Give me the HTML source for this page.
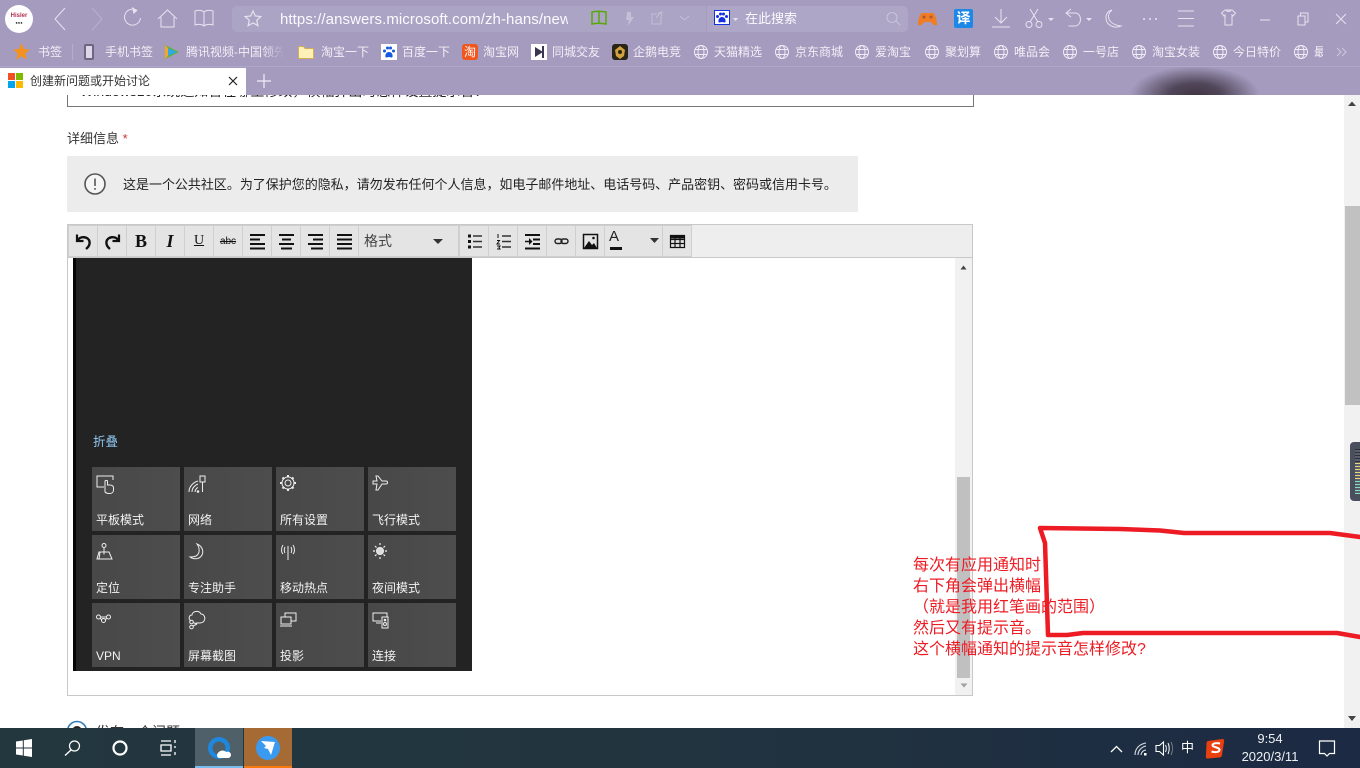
<!DOCTYPE html>
<html lang="zh-CN"><head><meta charset="utf-8"><title>创建新问题或开始讨论</title>
<style>
html,body{margin:0;padding:0;width:1360px;height:768px;overflow:hidden;background:#fff;font-family:"Liberation Sans","Noto Sans CJK SC",sans-serif;}
.a{position:absolute;white-space:nowrap;}
svg{position:absolute;overflow:visible;fill:none;}
.bm{position:absolute;top:44px;font-size:12px;line-height:16px;color:#f1eff6;white-space:nowrap;}
.tile{position:absolute;width:88px;height:64px;background:linear-gradient(90deg,#484848,#4d4d4d);}
.tile span{position:absolute;left:4px;top:45px;font-size:12px;line-height:16px;color:#f2f2f2;white-space:nowrap;}
.tile svg{left:4px;top:8px;stroke:#eee;stroke-width:1;}
.btn{position:absolute;top:226px;height:30px;width:28px;background:#e4e4e4;border-right:1px solid #cfcfcf;}
.btn svg{left:0;top:0;}
.r{position:absolute;left:913px;font-size:16px;line-height:21px;color:#ed1c24;white-space:nowrap;}
</style></head><body>

<!-- page content -->
<div class="a" style="left:67px;top:70px;width:905px;height:36px;border:1px solid #767676;border-top:0;"></div>
<div class="a" style="left:80px;top:81px;font-size:14px;line-height:20px;color:#222;">Windows10系统通知音在哪里修改，横幅弹出时怎样设置提示音？</div>
<div class="a" style="left:67px;top:130px;font-size:13px;line-height:18px;color:#333;">详细信息 <span style="color:#c33;">*</span></div>
<div class="a" style="left:67px;top:156px;width:791px;height:56px;background:#ececec;"></div>
<svg style="left:84px;top:173px" width="22" height="22"><circle cx="11" cy="11" r="10" stroke="#555" stroke-width="1.6" fill="#f5f5f5"/><path d="M11 5.500v7.500M11 15v1.800" stroke="#333" stroke-width="1.300"/></svg>
<div class="a" style="left:123px;top:176px;font-size:13px;line-height:18px;letter-spacing:-.02px;color:#222;">这是一个公共社区。为了保护您的隐私，请勿发布任何个人信息，如电子邮件地址、电话号码、产品密钥、密码或信用卡号。</div>

<!-- editor -->
<div class="a" style="left:67px;top:224px;width:904px;height:470px;border:1px solid #c8c8c8;background:#fff;"></div>
<div class="a" style="left:68px;top:225px;width:904px;height:32px;background:#eeeeee;border-bottom:1px solid #c8c8c8;"></div>
<div class="a" style="left:68px;top:225px;width:624px;height:32px;background:#cfcfcf;"></div>

<div class="btn" style="left:69px"><svg width="28" height="30"><path d="M8 8.500v6.500h6.500" stroke="#111" stroke-width="2.200"/><path d="M8.500 14.500c3-5 11-4 12 1 .6 3-1 5.500-3.500 7.500" stroke="#111" stroke-width="2.400"/></svg></div>
<div class="btn" style="left:98px"><svg width="28" height="30"><path d="M21 8.500v6.500h-6.500" stroke="#111" stroke-width="2.200"/><path d="M20.500 14.500c-3-5-11-4-12 1-.6 3 1 5.500 3.500 7.500" stroke="#111" stroke-width="2.400"/></svg></div>
<div class="btn" style="left:127px;text-align:center;font:bold 18px/31px 'Liberation Serif',serif;color:#111;">B</div>
<div class="btn" style="left:156px;text-align:center;font:italic bold 18px/31px 'Liberation Serif',serif;color:#111;">I</div>
<div class="btn" style="left:185px;text-align:center;font:14px/30px 'Liberation Serif',serif;color:#111;text-decoration:underline;">U</div>
<div class="btn" style="left:214px;text-align:center;font:10px/31px 'Liberation Sans',sans-serif;color:#111;"><span style="text-decoration:line-through;">abc</span></div>
<div class="btn" style="left:243px"><svg width="28" height="30"><path d="M7 9h15M7 13.500h10M7 18h15M7 22.500h15" stroke="#111" stroke-width="2"/></svg></div>
<div class="btn" style="left:272px"><svg width="28" height="30"><path d="M7 9h15M10 13.500h9M7 18h15M9 22.500h11" stroke="#111" stroke-width="2"/></svg></div>
<div class="btn" style="left:301px"><svg width="28" height="30"><path d="M7 9h15M12 13.500h10M7 18h15M10 22.500h12" stroke="#111" stroke-width="2"/></svg></div>
<div class="btn" style="left:330px"><svg width="28" height="30"><path d="M7 9h15M7 13.500h15M7 18h15M7 22.500h15" stroke="#111" stroke-width="2"/></svg></div>
<div class="btn" style="left:359px;width:99px;"><span class="a" style="left:5px;top:6px;font-size:14px;line-height:19px;color:#444;">格式</span><svg width="99" height="30"><path d="M74 13h10l-5 5z" fill="#333"/></svg></div>
<div class="btn" style="left:460px"><svg width="28" height="30"><path d="M8 8.500h3v3H8zM8 14h3v3H8zM8 19.500h3v3H8z" fill="#111"/><path d="M13 10h9M13 15.500h9M13 21h9" stroke="#333" stroke-width="1.400"/></svg></div>
<div class="btn" style="left:489px"><svg width="28" height="30"><path d="M9 8v4M8 14.500h2.500L8 18h3M8 20h3l-1 1.500 1 1.500H8" stroke="#111" stroke-width="1"/><path d="M13 10h9M13 15.500h9M13 21h9" stroke="#333" stroke-width="1.400"/></svg></div>
<div class="btn" style="left:518px"><svg width="28" height="30"><path d="M7 9h15M15 13.500h7M15 18h7M7 22.500h15" stroke="#111" stroke-width="2"/><path d="M7 15.500h5" stroke="#111" stroke-width="1.500"/><path d="M11 12v7l3.500-3.500z" fill="#111"/></svg></div>
<div class="btn" style="left:547px"><svg width="28" height="30"><rect x="8" y="13" width="7" height="4.500" rx="2.200" stroke="#222" stroke-width="1.400"/><rect x="14" y="13" width="7" height="4.500" rx="2.200" stroke="#222" stroke-width="1.400"/></svg></div>
<div class="btn" style="left:576px"><svg width="28" height="30"><rect x="7.500" y="8.500" width="14" height="14" stroke="#111" stroke-width="1.500"/><path d="M8 22l5-7 3 4 2-2 3 5z" fill="#111"/><circle cx="17.500" cy="12" r="1.300" fill="#111"/></svg></div>
<div class="btn" style="left:605px;width:57px;"><span class="a" style="left:4px;top:2px;font:15px/18px 'Liberation Sans',sans-serif;color:#222;">A</span><div class="a" style="left:5px;top:21px;width:12px;height:3px;background:#111;"></div><svg width="57" height="30"><path d="M45 12h9l-4.500 5z" fill="#333"/></svg></div>
<div class="btn" style="left:663px"><svg width="28" height="30"><path d="M7.500 9.500h14v12h-14zM7.500 13.500h14M7.500 17.500h14M12 9.500v12M17 9.500v12" stroke="#111" stroke-width="1.200"/><path d="M7 9h15v3.500H7z" fill="#111"/></svg></div>

<!-- inner scrollbar -->
<div class="a" style="left:955px;top:258px;width:17px;height:437px;background:#f1f1f1;"></div>
<div class="a" style="left:957px;top:477px;width:13px;height:201px;background:#c0c0c0;"></div>
<svg style="left:955px;top:258px" width="17" height="437"><path d="M5.500 11.500h6L8.500 7.500z" fill="#444"/><path d="M5.500 425.500h7L9 429.500z" fill="#a0a0a0"/></svg>

<!-- dark image -->
<div class="a" style="left:73px;top:258px;width:399px;height:413px;background:#232323;"></div>
<div class="a" style="left:73px;top:258px;width:3px;height:413px;background:#050505;"></div>
<div class="a" style="left:93px;top:434px;font-size:12.500px;line-height:16px;color:#8fc8f2;">折叠</div>

<div class="tile" style="left:92px;top:467px"><svg width="24" height="20"><path d="M8 12H1V1h16v4M9 17V6.500c0-1.500 2.500-1.500 2.500 0V10h2c2 0 4 .8 4 3v2c0 2-1.500 3.500-4 3.500h-1c-1.500 0-2.500-.5-3.500-1.500z"/></svg><span>平板模式</span></div>
<div class="tile" style="left:184px;top:467px"><svg width="24" height="20"><path d="M1 17C1 11 6 7 10 6M4 17c0-4 3-7 6-8M7 17c0-2 1.500-4 3-4.500"/><rect x="12" y="1" width="5" height="6"/><path d="M14.500 7v10"/><circle cx="10" cy="16.500" r=".8" fill="#eee"/></svg><span>网络</span></div>
<div class="tile" style="left:276px;top:467px"><svg width="24" height="20"><circle cx="8" cy="8" r="3"/><circle cx="8" cy="8" r="6"/><path d="M8 0v2.500M8 13.500V16M0 8h2.500M13.500 8H16M2.500 2.500l1.700 1.700M11.800 11.800l1.700 1.700M13.500 2.500l-1.700 1.700M4.200 11.800l-1.700 1.700" stroke-width="2"/></svg><span>所有设置</span></div>
<div class="tile" style="left:368px;top:467px"><svg width="24" height="20"><path d="M1 6h4l-1-5h2l4 5h4c2 0 2 3 0 3h-4l-4 6H4l1-6H1z"/></svg><span>飞行模式</span></div>

<div class="tile" style="left:92px;top:535px"><svg width="24" height="20"><circle cx="8" cy="2.500" r="2"/><path d="M8 4.500v5M3 9h10l3 7H1zM4 9l-1 7M8 9.500v2"/></svg><span>定位</span></div>
<div class="tile" style="left:184px;top:535px"><svg width="24" height="20"><path d="M9 1c5 2 7 7 5 11-2 4-8 5-12 2 5 0 8-1 9-5 .5-3-.5-6-2-8z"/></svg><span>专注助手</span></div>
<div class="tile" style="left:276px;top:535px"><svg width="24" height="20"><path d="M8 3v14M3 2C1 5 1 9 3 11M5 4c-1 2-1 4 0 6M13 2c2 3 2 7 0 9M11 4c1 2 1 4 0 6"/></svg><span>移动热点</span></div>
<div class="tile" style="left:368px;top:535px"><svg width="24" height="20"><circle cx="8" cy="8" r="3.500" fill="#ddd"/><path d="M8 0v2M8 14v2M1 8h2M13 8h2M3 3l1.500 1.500M11.500 11.500L13 13M13 3l-1.500 1.500M4.500 11.500L3 13" stroke-width="1.200"/></svg><span>夜间模式</span></div>

<div class="tile" style="left:92px;top:603px"><svg width="24" height="20"><circle cx="2.500" cy="6" r="2"/><circle cx="12.500" cy="6" r="2"/><circle cx="7.500" cy="9.500" r="2"/><path d="M4.500 6h6M4 7.500l2 1M11 7.500l-2 1"/></svg><span style="top:45px">VPN</span></div>
<div class="tile" style="left:184px;top:603px"><svg style="top:6px" width="24" height="20"><path d="M3 12C0 10 1 6 4 6c0-4 7-5 9-1 3 0 5 4 3 7-1 1.500-3 2-5 2H8"/><circle cx="3.500" cy="13" r="1.800"/><circle cx="3.500" cy="18" r="1.800"/><path d="M5 13.500l4 1.500M5 17l4-2"/></svg><span>屏幕截图</span></div>
<div class="tile" style="left:276px;top:603px"><svg width="24" height="20"><path d="M5 6V2h11v8h-5M1 6h10v7H1zM0 15h12"/></svg><span>投影</span></div>
<div class="tile" style="left:368px;top:603px"><svg width="24" height="20"><path d="M9 10H1V2h14v4M4 12h5"/><rect x="10" y="6" width="6" height="11"/><circle cx="13" cy="9" r=".8" fill="#eee"/><circle cx="13" cy="13" r="1.500"/></svg><span>连接</span></div>

<!-- red note -->
<div class="r" style="top:555px">每次有应用通知时</div>
<div class="r" style="top:576px">右下角会弹出横幅</div>
<div class="r" style="top:597px">（就是我用红笔画的范围）</div>
<div class="r" style="top:618px">然后又有提示音。</div>
<div class="r" style="top:639px">这个横幅通知的提示音怎样修改?</div>

<!-- bottom radio -->
<svg style="left:66px;top:720px" width="22" height="22"><circle cx="11" cy="11" r="9.500" stroke="#2a7ab8" stroke-width="1.500"/><circle cx="11" cy="11" r="5" fill="#222"/></svg>
<div class="a" style="left:96px;top:722px;font-size:14px;line-height:20px;color:#333;">发布一个问题</div>

<!-- page scrollbar -->
<div class="a" style="left:1344px;top:95px;width:16px;height:633px;background:#f1f1f1;"></div>
<div class="a" style="left:1345px;top:206px;width:15px;height:199px;background:#c1c1c1;"></div>
<svg style="left:1344px;top:95px" width="16" height="633"><path d="M4 11h8L8 6.500z" fill="#444"/><path d="M4 621h8l-4 5z" fill="#444"/></svg>

<svg style="left:0;top:0" width="1360" height="768"><path d="M1040 528L1120 529L1160 530.500L1184 533L1330 533L1360 537M1040 528L1045 543L1048 635L1067 635L1083 633L1337 633L1360 637" stroke="#ed1c24" stroke-width="4.500" stroke-linejoin="round" stroke-linecap="round"/></svg>

<!-- volume widget -->
<div class="a" style="left:1350px;top:442px;width:10px;height:59px;background:#4a4f5e;border-radius:4px 0 0 4px;"></div>
<div class="a" style="left:1355px;top:449px;width:5px;height:14px;background:repeating-linear-gradient(#2d2f38 0 1px,#5a5e6c 1px 3px);"></div>
<div class="a" style="left:1355px;top:463px;width:5px;height:18px;background:repeating-linear-gradient(#e6d878 0 1px,#5a5e6c 1px 3px);"></div>
<div class="a" style="left:1355px;top:481px;width:5px;height:13px;background:repeating-linear-gradient(#7fe0c0 0 1px,#5a5e6c 1px 3px);"></div>

<!-- browser chrome -->
<div class="a" style="left:0;top:0;width:1360px;height:95px;background:#a59bbf;overflow:hidden;">
  <div class="a" style="left:1130px;top:66px;width:130px;height:58px;background:radial-gradient(ellipse 50% 50% at 50% 50%,#423644 0%,#51475a 40%,rgba(165,155,191,0) 100%);"></div>
  <div class="a" style="left:0;top:66px;width:1360px;height:1px;background:#b0a7c9;"></div>
  <div class="a" style="left:232px;top:6px;width:474px;height:26px;background:#aca4c4;border-radius:5px 0 0 5px;"></div>
  <div class="a" style="left:706px;top:6px;width:202px;height:26px;background:#aea6c6;border-radius:0 5px 5px 0;border-left:1px solid #a59bbf;box-sizing:border-box;"></div>
  <div class="a" style="left:5px;top:5px;width:28px;height:28px;border-radius:50%;background:#fff;"></div>
  <div class="a" style="left:5px;top:13px;width:28px;text-align:center;font:bold 6px/7px 'Liberation Sans',sans-serif;color:#b03050;">Hisler</div>
  <div class="a" style="left:5px;top:20px;width:28px;text-align:center;font:4px/5px 'Liberation Sans',sans-serif;color:#333;">●●●</div>
  <svg style="left:0;top:0" width="1360" height="66" stroke="#e6e3ef" stroke-width="1">
    <path d="M65 8L55 19l10 11"/>
    <path d="M92 8l10 11-10 11" opacity=".3"/>
    <path d="M137 10.500a8 8 0 1 0 3.500 7.500"/><path d="M132 7l5.500 3.500-4 3.500" fill="#e6e3ef" stroke="none"/>
    <path d="M158 19l9.500-9 9.500 9M161 17v10h13V17"/>
    <path d="M195 11c3-1 7-1 9 1 2-2 6-2 9-1v14c-3-1-7-1-9 1-2-2-6-2-9-1zM204 12v14"/>
    <path d="M253 11l2.300 5 5.500.6-4.100 3.700 1.200 5.400-4.900-2.800-4.900 2.800 1.200-5.400-4.100-3.700 5.500-.6z" stroke-width="1.200"/>
    <path d="M592 12c4-1 9-1 14 0v12c-5-1-10-1-14 0zM599 12v12" stroke="#58a80c" stroke-width="1.500"/>
    <path d="M631 12h-4l-1 8h3l-1 6 6-9h-3z" fill="#c4bed6" stroke="none"/>
    <path d="M661 17v7h-9V14h5M658 13l4-1-1 5M661 12l-5 6" stroke="#c4bed6" stroke-width="1"/>
    <path d="M680 16l4.500 4 4.500-4" stroke="#c4bed6"/>
    <circle cx="892" cy="17.500" r="5" stroke="#c9c4da"/><path d="M896 21l4 4" stroke="#c9c4da"/>
    <path d="M1001 9v14M995 17l6 6 6-6M992 27h18"/>
    <circle cx="1029" cy="24.500" r="3"/><circle cx="1039" cy="24.500" r="3"/><path d="M1030 22L1038 9M1038 22L1030 9"/>
    <path d="M1048 18h6l-3 3z" fill="#e6e3ef" stroke="none"/>
    <path d="M1067 13h8c4 0 5.500 3.500 5.500 6.500s-2 6.500-6 6.500h-6M1071 9l-5 4 5 4"/>
    <path d="M1086 18h6l-3 3z" fill="#e6e3ef" stroke="none"/>
    <path d="M1112 10c-6 5-5 14 9 16-7 3-15-1-15-8 0-4 2-7 6-8z"/>
    <path d="M1143 19h2M1149 19h2M1155 19h2" stroke-width="1.600"/>
    <path d="M1178 11h16M1178 18.500h16M1178 26h16"/>
    <path d="M1225 10h7l3.500 3-2.500 3-1-1v10h-7V15l-1 1-2.500-3zM1226 10c1 2 4 2 5 0"/>
    <path d="M1260 20h10"/>
    <path d="M1298 16h7v9h-7zM1300.500 16v-3h7.500v9h-3"/>
    <path d="M1336 14l10 10M1346 14l-10 10"/>
    <path d="M733 18h5l-2.500 3z" fill="#e6e3ef" stroke="none"/>
  </svg>
  <div class="a" style="left:280px;top:10px;width:288px;height:20px;overflow:hidden;font-size:15px;line-height:19px;letter-spacing:.08px;color:#fbfaff;">https://answers.microsoft.com/zh-hans/new</div>
  <div class="a" style="left:714px;top:10px;width:16px;height:15px;background:#fff;border:1px solid #1530e0;box-sizing:border-box;"></div>
  <svg style="left:714px;top:10px" width="16" height="15"><path d="M8 7c3 0 4 3.500 3.500 5-.8 1-2.200 0-3.500 0s-2.700 1-3.500 0C4 10.500 5 7 8 7z" fill="#1530e0"/><circle cx="3.500" cy="6.500" r="1.500" fill="#1530e0"/><circle cx="6.500" cy="4" r="1.500" fill="#1530e0"/><circle cx="9.500" cy="4" r="1.500" fill="#1530e0"/><circle cx="12.500" cy="6.500" r="1.500" fill="#1530e0"/></svg>
  <div class="a" style="left:745px;top:10px;font-size:13px;line-height:18px;color:#fbfaff;">在此搜索</div>
  <svg style="left:918px;top:11px" width="20" height="15"><path d="M4 2h11c3 2 4 8 4 12-3 1-5-1-6-3H6c-1 2-3 4-6 3C0 10 1 4 4 2z" fill="#f07c24"/><circle cx="6" cy="6" r="1.500" fill="#a65a30"/><circle cx="13" cy="6" r="1.500" fill="#a65a30"/></svg>
  <div class="a" style="left:954px;top:9px;width:19px;height:19px;background:#1e88e8;border-radius:2px;text-align:center;font-size:14px;line-height:19px;font-weight:bold;color:#fff;">译</div>

  <!-- bookmarks -->
  <svg style="left:13px;top:43px" width="18" height="18"><path d="M8.500 0l2.400 6 6.100.5-4.700 4 1.500 6.200-5.300-3.400-5.300 3.400 1.500-6.200-4.700-4 6.100-.5z" fill="#f5911e"/></svg>
  <div class="bm" style="left:38px">书签</div>
  <div class="a" style="left:72px;top:44px;width:1px;height:16px;background:#b4accb;"></div>
  <div class="a" style="left:84px;top:44px;width:10px;height:16px;background:#dcd8e8;border:2px solid #6c6680;box-sizing:border-box;border-radius:2px;"></div>
  <div class="bm" style="left:105px">手机书签</div>
  <svg style="left:164px;top:44px" width="16" height="16"><path d="M1 1l14 7-14 7z" fill="#5fb52e"/><path d="M4 4l9 4-9 4z" fill="#2fa8e8"/><path d="M1 1l3 3v8l-3 3z" fill="#f5a623"/></svg>
  <div class="bm" style="left:186px;width:98px;overflow:hidden;-webkit-mask-image:linear-gradient(90deg,#000 80%,transparent);mask-image:linear-gradient(90deg,#000 80%,transparent);">腾讯视频-中国领先的</div>
  <svg style="left:298px;top:45px" width="16" height="14"><path d="M.5 1.500h5l1.500 2h8.500v10H.5z" fill="#fdf1b8" stroke="#d4ac5c"/></svg>
  <div class="bm" style="left:321px">淘宝一下</div>
  <div class="a" style="left:381px;top:44px;width:16px;height:16px;background:#fff;"></div>
  <svg style="left:381px;top:44px" width="16" height="16"><path d="M8 8c3 0 4 3 3.500 5-.8 1-2.200 0-3.500 0s-2.700 1-3.500 0C4 11 5 8 8 8z" fill="#1558e0"/><circle cx="3.500" cy="7" r="1.500" fill="#1558e0"/><circle cx="6.500" cy="4" r="1.500" fill="#1558e0"/><circle cx="9.500" cy="4" r="1.500" fill="#1558e0"/><circle cx="12.500" cy="7" r="1.500" fill="#1558e0"/></svg>
  <div class="bm" style="left:402px">百度一下</div>
  <div class="a" style="left:462px;top:44px;width:16px;height:16px;background:#f0561e;border-radius:3px;color:#fff;font-size:12px;line-height:16px;text-align:center;">淘</div>
  <div class="bm" style="left:483px">淘宝网</div>
  <svg style="left:531px;top:44px" width="16" height="16"><rect width="16" height="16" fill="#fff"/><path d="M4 3l8 5-8 5z" fill="#3a3550"/><path d="M12 2v12" stroke="#3a3550" stroke-width="2"/></svg>
  <div class="bm" style="left:552px">同城交友</div>
  <svg style="left:612px;top:44px" width="16" height="16"><rect width="16" height="16" rx="3" fill="#2a2418"/><path d="M8 2l5 4-1 6-4 3-4-3-1-6z" fill="#d0a040"/><circle cx="8" cy="8" r="2" fill="#2a2418"/></svg>
  <div class="bm" style="left:633px">企鹅电竞</div>
  <svg style="left:0;top:0" width="1360" height="66" stroke="#eeecf4" stroke-width="1">
    <g><circle cx="701" cy="52" r="6.500"/><ellipse cx="701" cy="52" rx="3" ry="6.500"/><path d="M695 49.500h12M695 54.500h12"/></g>
    <g transform="translate(81)"><circle cx="701" cy="52" r="6.500"/><ellipse cx="701" cy="52" rx="3" ry="6.500"/><path d="M695 49.500h12M695 54.500h12"/></g>
    <g transform="translate(161)"><circle cx="701" cy="52" r="6.500"/><ellipse cx="701" cy="52" rx="3" ry="6.500"/><path d="M695 49.500h12M695 54.500h12"/></g>
    <g transform="translate(231)"><circle cx="701" cy="52" r="6.500"/><ellipse cx="701" cy="52" rx="3" ry="6.500"/><path d="M695 49.500h12M695 54.500h12"/></g>
    <g transform="translate(300)"><circle cx="701" cy="52" r="6.500"/><ellipse cx="701" cy="52" rx="3" ry="6.500"/><path d="M695 49.500h12M695 54.500h12"/></g>
    <g transform="translate(369)"><circle cx="701" cy="52" r="6.500"/><ellipse cx="701" cy="52" rx="3" ry="6.500"/><path d="M695 49.500h12M695 54.500h12"/></g>
    <g transform="translate(438)"><circle cx="701" cy="52" r="6.500"/><ellipse cx="701" cy="52" rx="3" ry="6.500"/><path d="M695 49.500h12M695 54.500h12"/></g>
    <g transform="translate(519)"><circle cx="701" cy="52" r="6.500"/><ellipse cx="701" cy="52" rx="3" ry="6.500"/><path d="M695 49.500h12M695 54.500h12"/></g>
    <g transform="translate(600)"><circle cx="701" cy="52" r="6.500"/><ellipse cx="701" cy="52" rx="3" ry="6.500"/><path d="M695 49.500h12M695 54.500h12"/></g>
    <path d="M1337 48l4 4-4 4M1342 48l4 4-4 4" stroke="#cfcadf"/>
  </svg>
  <div class="bm" style="left:714px">天猫精选</div>
  <div class="bm" style="left:795px">京东商城</div>
  <div class="bm" style="left:875px">爱淘宝</div>
  <div class="bm" style="left:945px">聚划算</div>
  <div class="bm" style="left:1014px">唯品会</div>
  <div class="bm" style="left:1083px">一号店</div>
  <div class="bm" style="left:1152px">淘宝女装</div>
  <div class="bm" style="left:1233px">今日特价</div>
  <div class="bm" style="left:1314px;width:9px;overflow:hidden;">最</div>

  <!-- tab -->
  <div class="a" style="left:0;top:68px;width:246px;height:27px;background:#fff;"></div>
  <div class="a" style="left:8px;top:73px;width:7px;height:7px;background:#f25022;"></div>
  <div class="a" style="left:16px;top:73px;width:7px;height:7px;background:#7fba00;"></div>
  <div class="a" style="left:8px;top:81px;width:7px;height:7px;background:#00a4ef;"></div>
  <div class="a" style="left:16px;top:81px;width:7px;height:7px;background:#ffb900;"></div>
  <div class="a" style="left:30px;top:73px;font-size:12px;line-height:17px;color:#333;">创建新问题或开始讨论</div>
  <svg style="left:0;top:0" width="290" height="95"><path d="M229 77l8 8M237 77l-8 8" stroke="#222" stroke-width="1.200"/><path d="M264 74v14M257 81h14" stroke="#f0eef6" stroke-width="1.200"/></svg>
</div>

<!-- taskbar -->
<div class="a" style="left:0;top:728px;width:1360px;height:40px;background:linear-gradient(90deg,#23373f 0%,#22353f 45%,#1c2a43 100%);"></div>
<div class="a" style="left:195px;top:728px;width:48px;height:38px;background:#4f6068;"></div>
<div class="a" style="left:195px;top:766px;width:48px;height:2px;background:#79bcee;"></div>
<div class="a" style="left:244px;top:728px;width:48px;height:38px;background:#a66a34;"></div>
<div class="a" style="left:244px;top:766px;width:48px;height:2px;background:#f77a10;"></div>
<svg style="left:0;top:728px" width="1360" height="40">
  <path d="M16 13.500l6.800-1v7H16zM23.800 12.300L32 11v8.500h-8.200zM16 20.500h6.800v7l-6.800-1zM23.800 20.500H32V29l-8.200-1.200z" fill="#fff"/>
  <circle cx="74.500" cy="18" r="5" stroke="#fff" stroke-width="1.200"/><path d="M71 22L65 27.500" stroke="#fff" stroke-width="1.400"/>
  <circle cx="120" cy="20" r="6.500" stroke="#fff" stroke-width="2.200"/>
  <path d="M161 13h10M161 27h10M161 17h10v6h-10zM175 12v3M175 18v2M175 24v3" stroke="#fff" stroke-width="1.300"/>
  <circle cx="219" cy="20" r="11" fill="#1e88e0"/><circle cx="219" cy="20" r="6.500" fill="#4f6068"/><path d="M217 27c1-4 6-6 9-3 2-1 5 0 5 3 0 1-1 3-3 3h-8c-2 0-3-1-3-3z" fill="#fff"/>
  <circle cx="268" cy="20" r="12" fill="#3a9af0"/><path d="M261 13l14 1-4 13-3-6-4-1 2-2z" fill="#fff"/>
  <path d="M1111 24l5.500-5.500 5.500 5.500" stroke="#fff" stroke-width="1.300"/>
  <path d="M1135 27c0-7 5-11 11-12M1138 27c0-4 3-8 8-9M1141 27c0-2 2-5 5-5" stroke="#d8dde4" stroke-width="1.100"/><rect x="1144" y="25" width="2.500" height="2.500" fill="#fff"/>
  <path d="M1156 17.500h3.500l4-3.500v13l-4-3.500H1156z" stroke="#fff" stroke-width="1.100"/><path d="M1165.500 17c1 2 1 5 0 7M1168 15c1.600 3 1.600 8 0 11" stroke="#fff" stroke-width="1"/><path d="M1171 14c2 4 2 9 0 13" stroke="#777f8c" stroke-width="1"/>
  <path d="M1208 13l14-2c2 0 2.500 1 2 3l-2 13c0 2-2 2.500-3 2.500l-11 1c-2 0-2.500-1-2-3l.5-12c0-1.500 1-2.500 1.500-2.500z" fill="#e8400f"/>
  <path d="M1220 15.500c-3-.8-7-.5-7.500 1.500-.5 2.500 7.500 2 7 5-.5 2.500-5 2.500-8 1.500" stroke="#fff" stroke-width="2"/>
  <path d="M1319.500 13h15v12.500h-5l-2.500 2.500-2.500-2.500h-5z" stroke="#fff" stroke-width="1.200"/>
</svg>
<div class="a" style="left:1181px;top:739px;font-size:13px;line-height:18px;color:#fff;">中</div>
<div class="a" style="left:1240px;top:731px;width:60px;text-align:center;font-size:13px;line-height:16px;color:#eef1f4;">9:54</div>
<div class="a" style="left:1240px;top:749px;width:60px;text-align:center;font-size:13px;line-height:16px;color:#eef1f4;">2020/3/11</div>

</body></html>
